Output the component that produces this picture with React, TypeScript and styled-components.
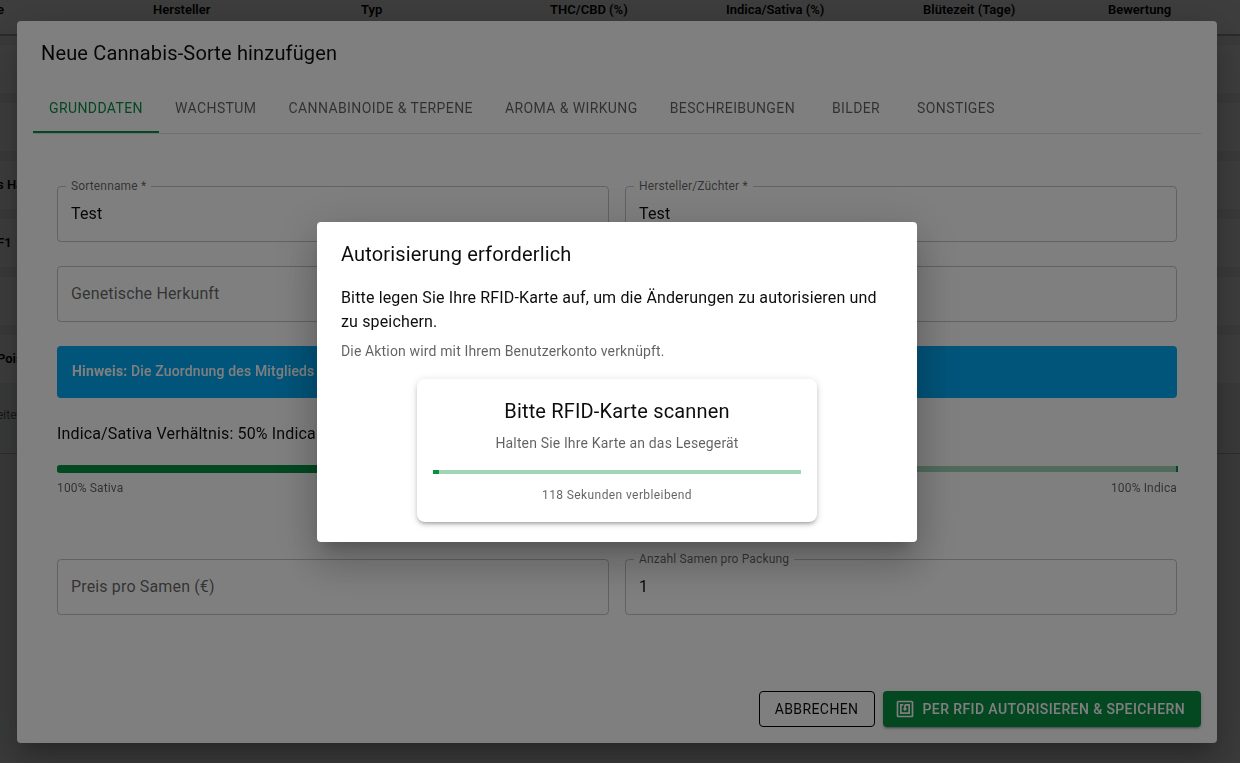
import React, { useState } from "react";
import styled, { createGlobalStyle, css } from "styled-components";

const green = "#089044";
const textPrimary = "rgba(0, 0, 0, 0.95)";
const textSecondary = "rgba(0, 0, 0, 0.62)";

const GlobalStyle = createGlobalStyle`
  * { box-sizing: border-box; }
  body {
    margin: 0;
    overflow: hidden;
    background: #eceeed;
    color: ${textPrimary};
    font-family: Roboto, "Liberation Sans", sans-serif;
    font-size: 16px;
    line-height: 24px;
    letter-spacing: 0.00938em;
  }
  h2, h3, p { margin: 0; font-weight: 400; }
  button, input { font-family: inherit; }
`;

/* Strain list behind the dialogs */

const Page = styled.main`
  min-height: 100vh;
  margin-left: -3px;
`;

const StrainTable = styled.table`
  width: 100%;
  table-layout: fixed;
  border-collapse: collapse;
  background: #e9edeb;
  border-bottom: 1px solid #b4b8b6;
`;

const HeadCell = styled.th<{ $width?: number }>`
  width: ${(p) => (p.$width ? `${p.$width}px` : "auto")};
  height: 35px;
  padding: 0 0 15px;
  border-bottom: 2px solid #b0b0b0;
  background: #f8f8f8;
  color: #000;
  font-size: 13px;
  font-weight: 600;
  line-height: 18px;
  letter-spacing: normal;
  text-align: left;
  white-space: nowrap;
`;

const GapRow = styled.tr`
  height: 10px;
`;

const NameCell = styled.td`
  height: 48px;
  padding: 0;
  background: #fafafa;
  color: #000;
  font-size: 13px;
  font-weight: 600;
  line-height: 20px;
  letter-spacing: normal;
  white-space: nowrap;
`;

const FootCell = styled.td`
  height: 70px;
  padding: 22px 0 0;
  color: ${textSecondary};
  font-size: 12px;
  line-height: 20px;
  letter-spacing: normal;
  vertical-align: top;
`;

/* Dialog shell */

const Backdrop = styled.div`
  position: fixed;
  inset: 0;
  display: flex;
  align-items: center;
  justify-content: center;
  padding-right: 6px;
  background: rgba(0, 0, 0, 0.5);
`;

const Dialog = styled.section<{ $maxWidth: number }>`
  width: 100%;
  max-width: ${(p) => p.$maxWidth}px;
  border-radius: 4px;
  background: #fff;
  box-shadow:
    0 11px 15px -7px rgba(0, 0, 0, 0.2),
    0 24px 38px 3px rgba(0, 0, 0, 0.14),
    0 9px 46px 8px rgba(0, 0, 0, 0.12);
`;

const DialogTitle = styled.h2`
  padding: 16px 24px;
  font-size: 20px;
  line-height: 32px;
  letter-spacing: 0.0075em;
`;

const DialogActions = styled.footer`
  display: flex;
  justify-content: flex-end;
  gap: 8px;
  padding: 16px;
`;

/* Tabs */

const TabList = styled.div`
  display: flex;
  margin: 0 16px;
  border-bottom: 1px solid rgba(0, 0, 0, 0.12);
`;

const Tab = styled.button<{ $active: boolean }>`
  min-width: 90px;
  height: 48px;
  padding: 0 16px;
  border: 0;
  border-bottom: 2px solid ${(p) => (p.$active ? green : "transparent")};
  background: none;
  color: ${(p) => (p.$active ? green : textSecondary)};
  font-size: 14px;
  line-height: 18px;
  letter-spacing: 0.02857em;
  text-transform: uppercase;
  white-space: nowrap;
  cursor: pointer;
`;

/* Form */

const Form = styled.form`
  display: grid;
  grid-template-columns: 1fr 1fr;
  gap: 24px 16px;
  padding: 52px 40px 60px;
`;

const wideItem = css`
  grid-column: 1 / -1;
`;

const FieldBox = styled.div<{ $wide?: boolean }>`
  position: relative;
  ${(p) => p.$wide && wideItem}
`;

const FieldInput = styled.input`
  display: block;
  width: 100%;
  height: 56px;
  padding: 0 13px;
  border: 1px solid rgba(0, 0, 0, 0.23);
  border-radius: 4px;
  background: none;
  color: ${textPrimary};
  font-size: 16px;
  letter-spacing: 0.00938em;
  outline: none;
`;

const FieldLabel = styled.label<{ $floating: boolean }>`
  position: absolute;
  left: 9px;
  padding: 0 5px;
  background: #fff;
  color: ${textSecondary};
  pointer-events: none;
  ${(p) =>
    p.$floating
      ? css`
          top: -10px;
          font-size: 12px;
          line-height: 20px;
        `
      : css`
          top: 16px;
          font-size: 16px;
          line-height: 24px;
        `}
`;

const Notice = styled.div`
  ${wideItem}
  padding: 14px 15px 16px;
  border-radius: 4px;
  background: #03a9f4;
  color: #fff;
  font-size: 14px;
  font-weight: 500;
  line-height: 22px;
  letter-spacing: 0.01071em;
`;

const Ratio = styled.div`
  ${wideItem}
  padding-bottom: 37px;
`;

const RatioLabel = styled.label`
  display: block;
`;

const SliderBox = styled.div`
  position: relative;
  display: flex;
  align-items: center;
  height: 8px;
  margin: 19px 0 5px;
`;

const SliderRail = styled.div`
  flex: 1;
  height: 6px;
  border-right: 2px solid ${green};
  margin-right: -1px;
  background: #a1d5b8;
`;

const SliderTrack = styled.div`
  position: absolute;
  inset: 0 auto 0 0;
  border-radius: 3px;
  background: ${green};
`;

const SliderInput = styled.input`
  position: absolute;
  inset: 0;
  width: 100%;
  margin: 0;
  opacity: 0;
`;

const SliderEnds = styled.div`
  display: flex;
  justify-content: space-between;
  color: ${textSecondary};
  font-size: 12px;
  line-height: 20px;
`;

/* Buttons */

const Button = styled.button<{ $primary?: boolean }>`
  display: inline-flex;
  align-items: center;
  gap: 8px;
  height: 36px;
  border-radius: 4px;
  font-size: 14px;
  line-height: 24px;
  letter-spacing: 0.02857em;
  text-transform: uppercase;
  white-space: nowrap;
  cursor: pointer;
  ${(p) =>
    p.$primary
      ? css`
          padding: 0 16px 0 12px;
          border: 0;
          background: ${green};
          color: #fff;
          font-weight: 500;
          box-shadow:
            0 3px 1px -2px rgba(0, 0, 0, 0.2),
            0 2px 2px 0 rgba(0, 0, 0, 0.14),
            0 1px 5px 0 rgba(0, 0, 0, 0.12);
        `
      : css`
          padding: 0 15px;
          border: 1px solid #000;
          background: none;
          color: ${textPrimary};
          font-weight: 400;
        `}
`;

/* Authorization dialog */

const AuthBody = styled.div`
  display: flex;
  flex-direction: column;
  gap: 7px;
  padding: 0 24px 20px;
`;

const SmallText = styled.p`
  color: ${textSecondary};
  font-size: 14px;
  line-height: 20px;
  letter-spacing: 0.01071em;
`;

const ScanCard = styled.div`
  align-self: center;
  width: 100%;
  max-width: 400px;
  margin-top: 11px;
  padding: 16px 16px 17px;
  border-radius: 8px;
  text-align: center;
  box-shadow:
    0 3px 3px -2px rgba(0, 0, 0, 0.2),
    0 3px 4px 0 rgba(0, 0, 0, 0.14),
    0 1px 8px 0 rgba(0, 0, 0, 0.12);
`;

const ScanTitle = styled.h3`
  margin-bottom: 6px;
  font-size: 20px;
  line-height: 32px;
  letter-spacing: 0.0075em;
`;

const Progress = styled.div`
  height: 4px;
  margin: 17px 0 11px;
  background: #a1d5b8;
`;

const ProgressBar = styled.div`
  height: 100%;
  background: ${green};
`;

const Remaining = styled.p`
  color: ${textSecondary};
  font-size: 12px;
  line-height: 20px;
  letter-spacing: 0.03333em;
`;

function NfcIcon() {
  return (
    <svg width="20" height="20" viewBox="0 0 24 24" fill="currentColor" aria-hidden="true">
      <path d="M20 2H4c-1.1 0-2 .9-2 2v16c0 1.1.9 2 2 2h16c1.1 0 2-.9 2-2V4c0-1.1-.9-2-2-2zm0 18H4V4h16v16zM18 6h-5c-1.1 0-2 .9-2 2v2.28c-.6.35-1 .98-1 1.72 0 1.1.9 2 2 2s2-.9 2-2c0-.74-.4-1.38-1-1.72V8h3v8H8V8h2V6H6v12h12V6z" />
    </svg>
  );
}

interface FieldProps {
  id: string;
  label: string;
  initial?: string;
  wide?: boolean;
}

function Field({ id, label, initial = "", wide }: FieldProps) {
  const [value, setValue] = useState(initial);
  return (
    <FieldBox $wide={wide}>
      <FieldInput id={id} value={value} onChange={(e) => setValue(e.target.value)} />
      <FieldLabel htmlFor={id} $floating={value !== ""}>
        {label}
      </FieldLabel>
    </FieldBox>
  );
}

const columns = [
  { title: "e", width: 156 },
  { title: "Hersteller", width: 208 },
  { title: "Typ", width: 189 },
  { title: "THC/CBD (%)", width: 176 },
  { title: "Indica/Sativa (%)", width: 197 },
  { title: "Blütezeit (Tage)", width: 185 },
  { title: "Bewertung" },
];

const strains = ["", "", "s Ha", "F1", "", "Pois"];

const tabs = [
  "Grunddaten",
  "Wachstum",
  "Cannabinoide & Terpene",
  "Aroma & Wirkung",
  "Beschreibungen",
  "Bilder",
  "Sonstiges",
];

const scanSeconds = 120;

export default function App() {
  const [tab, setTab] = useState(tabs[0]);
  const [ratio, setRatio] = useState(50);
  const remaining = 118;

  return (
    <>
      <GlobalStyle />
      <Page>
        <StrainTable>
          <thead>
            <tr>
              {columns.map((c) => (
                <HeadCell key={c.title} $width={c.width}>
                  {c.title}
                </HeadCell>
              ))}
            </tr>
          </thead>
          <tbody>
            {strains.map((name, i) => (
              <React.Fragment key={i}>
                <GapRow />
                <tr>
                  <NameCell colSpan={columns.length}>{name}</NameCell>
                </tr>
              </React.Fragment>
            ))}
          </tbody>
          <tfoot>
            <tr>
              <FootCell colSpan={columns.length}>eite</FootCell>
            </tr>
          </tfoot>
        </StrainTable>
      </Page>

      <Backdrop>
        <Dialog $maxWidth={1200} role="dialog" aria-labelledby="strain-title">
          <DialogTitle id="strain-title">Neue Cannabis-Sorte hinzufügen</DialogTitle>
          <TabList role="tablist">
            {tabs.map((t) => (
              <Tab
                key={t}
                type="button"
                role="tab"
                aria-selected={t === tab}
                $active={t === tab}
                onClick={() => setTab(t)}
              >
                {t}
              </Tab>
            ))}
          </TabList>
          <Form>
            <Field id="name" label="Sortenname *" initial="Test" />
            <Field id="breeder" label="Hersteller/Züchter *" initial="Test" />
            <Field id="origin" label="Genetische Herkunft" wide />
            <Notice>
              <strong>Hinweis:</strong> Die Zuordnung des Mitglieds e
            </Notice>
            <Ratio>
              <RatioLabel htmlFor="ratio">Indica/Sativa Verhältnis: {ratio}% Indica</RatioLabel>
              <SliderBox>
                <SliderRail />
                <SliderTrack style={{ width: `${ratio}%` }} />
                <SliderInput
                  id="ratio"
                  type="range"
                  value={ratio}
                  onChange={(e) => setRatio(Number(e.target.value))}
                />
              </SliderBox>
              <SliderEnds>
                <span>100% Sativa</span>
                <span>100% Indica</span>
              </SliderEnds>
            </Ratio>
            <Field id="price" label="Preis pro Samen (€)" />
            <Field id="seeds" label="Anzahl Samen pro Packung" initial="1" />
          </Form>
          <DialogActions>
            <Button type="button">Abbrechen</Button>
            <Button type="button" $primary>
              <NfcIcon />
              Per RFID autorisieren &amp; speichern
            </Button>
          </DialogActions>
        </Dialog>
      </Backdrop>

      <Backdrop>
        <Dialog $maxWidth={600} role="dialog" aria-modal="true" aria-labelledby="auth-title">
          <DialogTitle id="auth-title">Autorisierung erforderlich</DialogTitle>
          <AuthBody>
            <p>
              Bitte legen Sie Ihre RFID-Karte auf, um die Änderungen zu autorisieren und zu
              speichern.
            </p>
            <SmallText>Die Aktion wird mit Ihrem Benutzerkonto verknüpft.</SmallText>
            <ScanCard>
              <ScanTitle>Bitte RFID-Karte scannen</ScanTitle>
              <SmallText>Halten Sie Ihre Karte an das Lesegerät</SmallText>
              <Progress
                role="progressbar"
                aria-label="Verbleibende Zeit"
                aria-valuemin={0}
                aria-valuemax={scanSeconds}
                aria-valuenow={scanSeconds - remaining}
              >
                <ProgressBar style={{ width: `${((scanSeconds - remaining) / scanSeconds) * 100}%` }} />
              </Progress>
              <Remaining>{remaining} Sekunden verbleibend</Remaining>
            </ScanCard>
          </AuthBody>
        </Dialog>
      </Backdrop>
    </>
  );
}
